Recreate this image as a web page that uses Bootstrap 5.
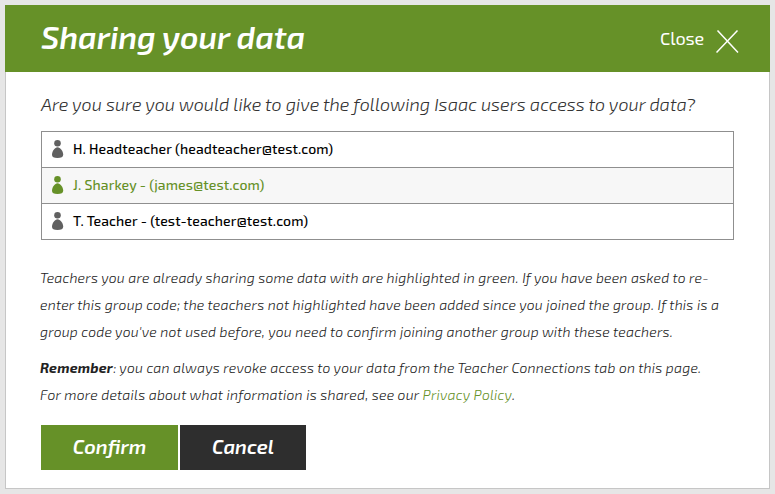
<!DOCTYPE html>
<html lang="en">
<head>
<meta charset="utf-8">
<meta name="viewport" content="width=device-width, initial-scale=1">
<title>Sharing your data</title>
<link href="https://cdn.jsdelivr.net/npm/bootstrap@5.3.0/dist/css/bootstrap.min.css" rel="stylesheet">
<style>
body{background:#e6e6e6;font-family:"Exo 2","Open Sans",sans-serif;color:#333;height:494px;padding:5px;overflow:hidden}
.share-panel{height:484px;background:#fff}
.share-head{height:67px;background:#669128;padding:0 31px 0 36px}
.share-title{font-size:32px;font-weight:600;font-style:italic;line-height:62px;letter-spacing:-.06px}
.close-link{font-size:18px;gap:12px}
.close-link span{letter-spacing:-.15px}
.close-link svg{margin-top:5px}
.share-body{height:417px;border:1px solid #c6c6c6;border-top:0;padding:19px 35px 0}
.question{font-size:18px;font-weight:300;font-style:italic;line-height:26px;margin-bottom:14px}
.users{border:1px solid #8f8f8f;border-bottom:0;width:693px}
.user-row{height:36px;border-bottom:1px solid #8f8f8f;padding-left:10px;gap:9px;color:#000;font-size:14px;font-weight:500;line-height:33px;letter-spacing:.1px}
.user-row span{margin-top:-2px}
.user-row svg{fill:#606060;margin-top:-1px}
.user-row.sharing{background:#f7f7f7;color:#669128}
.user-row.sharing svg{fill:#669128}
.info{font-size:14px;font-weight:300;font-style:italic;line-height:27px;letter-spacing:.19px;margin:0 0 9px -1px;color:#222}
.info b{font-weight:700}
.info a{color:#669128}
.action{height:45px;border-radius:0;border:0;font-size:20px;font-weight:600;font-style:italic;color:#fff;line-height:43px;padding:0 0 2px}
.confirm{width:137px;background:#669128}
.cancel{width:126px;background:#2e2e2e}
.text-line{display:block;white-space:nowrap}
.actions{gap:2px;margin-top:17px}
</style>
</head>
<body>
<div class="share-panel">
<header class="share-head d-flex justify-content-between text-white">
<h1 class="share-title m-0"><span>Sharing your data</span></h1>
<a class="close-link d-flex align-items-center text-white text-decoration-none" href="#"><span>Close</span>
<svg width="23" height="23" viewBox="0 0 23 23" fill="none" stroke="#fff" stroke-width="1.5"><path d="M1.5 .5 22 22.5M21.5 .5.5 22.5"/></svg></a>
</header>
<main class="share-body">
<p class="question text-nowrap"><span>Are you sure you would like to give the following Isaac users access to your data?</span></p>
<div class="users">
<div class="user-row d-flex align-items-center"><svg width="12" height="18" viewBox="0 0 12 18"><circle cx="5.500" cy="3.3" r="3.3"/><path d="M5.500 7.3C8.300 7.300 11.200 11.400 11.200 14.700 11.200 17 9.200 18 5.500 18S0 17 0 14.700C0 11.400 2.900 7.300 5.500 7.300Z"/></svg><span>H. Headteacher (headteacher@test.com)</span></div>
<div class="user-row sharing d-flex align-items-center"><svg width="12" height="18" viewBox="0 0 12 18"><circle cx="5.500" cy="3.3" r="3.3"/><path d="M5.500 7.3C8.300 7.300 11.200 11.400 11.200 14.700 11.200 17 9.200 18 5.500 18S0 17 0 14.700C0 11.400 2.900 7.300 5.500 7.300Z"/></svg><span>J. Sharkey - (james@test.com)</span></div>
<div class="user-row d-flex align-items-center"><svg width="12" height="18" viewBox="0 0 12 18"><circle cx="5.500" cy="3.3" r="3.3"/><path d="M5.500 7.3C8.300 7.300 11.200 11.400 11.200 14.700 11.200 17 9.200 18 5.500 18S0 17 0 14.700C0 11.400 2.900 7.300 5.500 7.300Z"/></svg><span>T. Teacher - (test-teacher@test.com)</span></div>
</div>
<div class="notes pt-4">
<p class="info"><span class="text-line">Teachers you are already sharing some data with are highlighted in green. If you have been asked to re-</span>
<span class="text-line">enter this group code; the teachers not highlighted have been added since you joined the group. If this is a</span>
<span class="text-line">group code you've not used before, you need to confirm joining another group with these teachers.</span></p>
<p class="info"><span class="text-line"><b>Remember</b>: you can always revoke access to your data from the Teacher Connections tab on this page.</span>
<span class="text-line">For more details about what information is shared, see our <a class="text-decoration-none" href="#">Privacy Policy</a>.</span></p>
</div>
<div class="actions d-flex"><button class="btn action confirm"><span>Confirm</span></button><button class="btn action cancel"><span>Cancel</span></button></div>
</main>
</div>
</body>
</html>
